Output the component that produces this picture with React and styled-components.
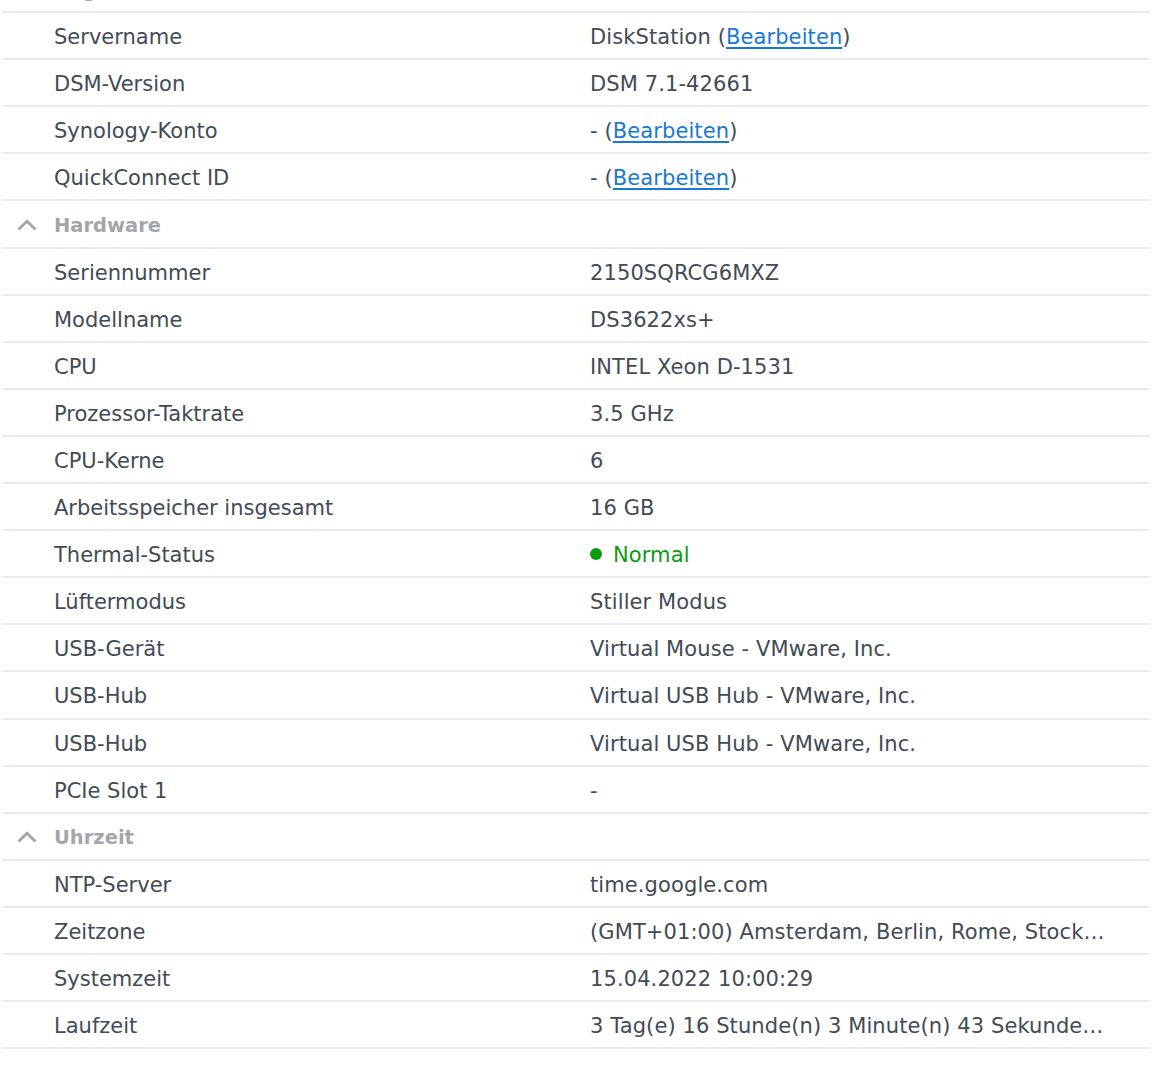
import React from "react";
import styled, { createGlobalStyle } from "styled-components";

const GlobalStyle = createGlobalStyle`
  html, body {
    margin: 0;
    padding: 0;
    background: #ffffff;
  }
  body {
    font-family: "DejaVu Sans", Verdana, sans-serif;
    color: #414b55;
  }
`;

const Viewport = styled.div`
  width: 1170px;
  height: 1065px;
  overflow: hidden;
`;

const Table = styled.div`
  margin: -34px 20px 0 2px;
`;

const Row = styled.div`
  display: grid;
  grid-template-columns: 588px 1fr;
  align-items: center;
  box-sizing: border-box;
  height: 47.1px;
  padding-top: 3px;
  border-bottom: 2px solid #e9ebf0;
`;

const Label = styled.div`
  padding-left: 52px;
  font-size: 21px;
  white-space: nowrap;
`;

const Value = styled.div`
  font-size: 21px;
  letter-spacing: 0.1px;
  padding-right: 43px;
  white-space: nowrap;
  overflow: hidden;
  text-overflow: ellipsis;
  color: ${(p) => (p.$status ? "#0b9b12" : "#414b55")};
`;

const Link = styled.a`
  color: #1878d6;
  text-decoration: underline;
  text-decoration-thickness: 1.5px;
  text-underline-offset: 3px;
  cursor: pointer;
`;

const Dot = styled.span`
  display: inline-block;
  width: 12px;
  height: 12px;
  border-radius: 50%;
  background: #0b9b12;
  margin-right: 11px;
  vertical-align: 2px;
`;

const GroupHeader = styled.div`
  display: flex;
  align-items: center;
  box-sizing: border-box;
  height: 47.1px;
  padding-top: 3px;
  border-bottom: 2px solid #e9ebf0;
  color: #a2a6ab;
  font-size: 19.5px;
  font-weight: bold;
`;

const Chevron = styled.span`
  width: 52px;
  display: flex;
  justify-content: center;
  padding: 0 2px 2px 0;
  box-sizing: border-box;
`;

const Edit = () => (
  <>
    (<Link>Bearbeiten</Link>)
  </>
);

const groups = [
  {
    title: "Allgemein",
    rows: [
      ["Servername", <>DiskStation <Edit /></>],
      ["DSM-Version", "DSM 7.1-42661"],
      ["Synology-Konto", <>- <Edit /></>],
      ["QuickConnect ID", <>- <Edit /></>],
    ],
  },
  {
    title: "Hardware",
    rows: [
      ["Seriennummer", "2150SQRCG6MXZ"],
      ["Modellname", "DS3622xs+"],
      ["CPU", "INTEL Xeon D-1531"],
      ["Prozessor-Taktrate", "3.5 GHz"],
      ["CPU-Kerne", "6"],
      ["Arbeitsspeicher insgesamt", "16 GB"],
      ["Thermal-Status", "Normal", true],
      ["Lüftermodus", "Stiller Modus"],
      ["USB-Gerät", "Virtual Mouse - VMware, Inc."],
      ["USB-Hub", "Virtual USB Hub - VMware, Inc."],
      ["USB-Hub", "Virtual USB Hub - VMware, Inc."],
      ["PCIe Slot 1", "-"],
    ],
  },
  {
    title: "Uhrzeit",
    rows: [
      ["NTP-Server", "time.google.com"],
      ["Zeitzone", "(GMT+01:00) Amsterdam, Berlin, Rome, Stockholm, Vienna"],
      ["Systemzeit", "15.04.2022 10:00:29"],
      ["Laufzeit", "3 Tag(e) 16 Stunde(n) 3 Minute(n) 43 Sekunde(n)"],
    ],
  },
];

const App = () => (
  <Viewport>
    <GlobalStyle />
    <Table>
      {groups.map((g) => (
        <React.Fragment key={g.title}>
          <GroupHeader>
            <Chevron>
              <svg width="20" height="12" viewBox="0 0 20 12" fill="none">
                <path d="M1.5 10.5 L10 2.2 L18.5 10.5" stroke="#a2a6ab" strokeWidth="2.8" />
              </svg>
            </Chevron>
            {g.title}
          </GroupHeader>
          {g.rows.map(([label, value, status], i) => (
            <Row key={g.title + i}>
              <Label>{label}</Label>
              <Value $status={status}>
                {status && <Dot />}
                {value}
              </Value>
            </Row>
          ))}
        </React.Fragment>
      ))}
    </Table>
  </Viewport>
);

export default App;
